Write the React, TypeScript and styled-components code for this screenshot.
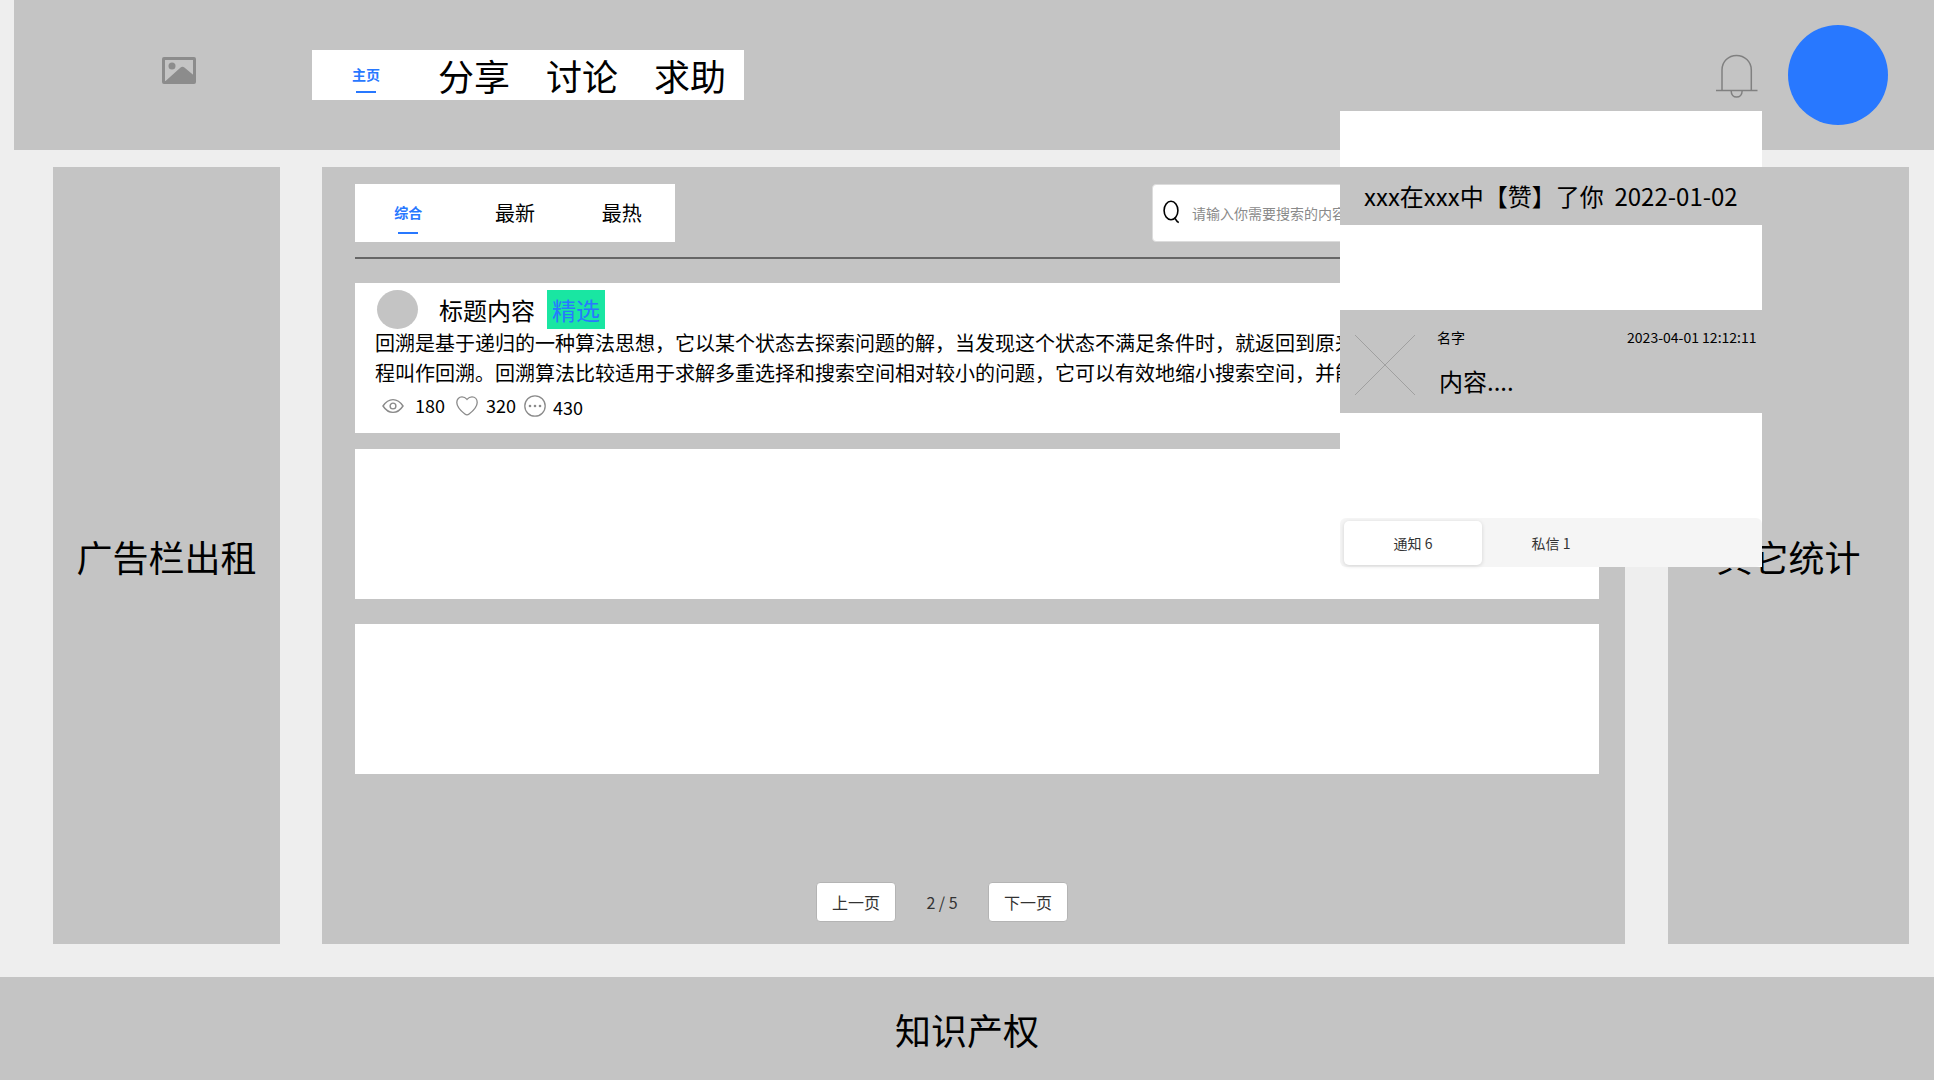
import React from "react";
import styled, { createGlobalStyle } from "styled-components";

const GREY = "#c4c4c4";
const BLUE = "#2878ff";

const GlobalStyle = createGlobalStyle`
  *, *::before, *::after { box-sizing: border-box; }
  body {
    margin: 0;
    background: #eeeeee;
    color: #000;
    font-family: "Noto Sans CJK SC", sans-serif;
  }
  button { font-family: inherit; }
  p { margin: 0; }
  svg { display: block; flex: none; }
`;

const Page = styled.div`
  position: relative;
  display: flex;
  flex-direction: column;
  width: 1934px;
  height: 1080px;
  overflow: hidden;
`;

const Header = styled.header`
  display: flex;
  align-items: center;
  height: 150px;
  margin-left: 14px;
  padding: 0 46px 0 148px;
  background: ${GREY};
`;

const Logo = styled.div`
  width: 150px;
  padding-bottom: 9px;
`;

const Nav = styled.nav`
  display: grid;
  grid-template-columns: repeat(4, 1fr);
  width: 432px;
  height: 50px;
  background: #fff;
`;

const Tab = styled.a<{ $size: number; $active?: boolean; $drop?: number }>`
  display: flex;
  flex-direction: column;
  align-items: center;
  justify-content: center;
  font-size: ${(p) => (p.$active ? 14 : p.$size)}px;
  font-weight: ${(p) => (p.$active ? 700 : 400)};
  line-height: ${(p) => (p.$active ? "20px" : "50px")};
  color: ${(p) => (p.$active ? BLUE : "#000")};
  padding-top: ${(p) => p.$drop ?? 0}px;
  white-space: nowrap;
`;

const Underline = styled.span<{ $gap: number }>`
  width: 20px;
  height: 2px;
  margin-top: ${(p) => p.$gap}px;
  background: ${BLUE};
`;

const HeaderActions = styled.div`
  display: flex;
  align-items: center;
  gap: 30px;
  margin-left: auto;

  svg { margin-top: 2px; }
`;

const Avatar = styled.div<{ $w: number; $h: number; $color: string }>`
  width: ${(p) => p.$w}px;
  height: ${(p) => p.$h}px;
  border-radius: 50%;
  background: ${(p) => p.$color};
`;

const Body = styled.main`
  display: grid;
  grid-template-columns: 227px 1303px 241px;
  column-gap: 42px;
  height: 777px;
  margin: 17px 0 33px 53px;

  & > :last-child { margin-left: 1px; margin-right: -1px; }
`;

const SidePanel = styled.aside`
  display: flex;
  align-items: center;
  justify-content: center;
  background: ${GREY};
  font-size: 36px;
`;

const Content = styled.section`
  display: flex;
  flex-direction: column;
  padding: 17px 26px 0 33px;
  background: ${GREY};
`;

const Toolbar = styled.div`
  display: flex;
  justify-content: space-between;
  height: 75px;
  padding-bottom: 15px;
  border-bottom: 2px solid #666;
`;

const FilterTabs = styled.div`
  display: grid;
  grid-template-columns: repeat(3, 1fr);
  width: 320px;
  height: 58px;
  background: #fff;
`;

const SearchBox = styled.div`
  display: flex;
  align-items: center;
  gap: 12px;
  width: 447px;
  height: 58px;
  padding-left: 10px;
  border: 1px solid #dcdcdc;
  border-radius: 4px;
  background: #fff;

  svg { margin-bottom: 3px; }
`;

const Placeholder = styled.span`
  font-size: 14px;
  line-height: 20px;
  color: #8a8a8a;
`;

const Card = styled.article<{ $gap: number }>`
  height: 150px;
  flex: none;
  margin-top: ${(p) => p.$gap}px;
  padding: 7px 20px 0;
  background: #fff;
`;

const CardHead = styled.div`
  display: flex;
  align-items: center;
  height: 39px;
  padding-left: 2px;
`;

const Title = styled.h2`
  margin: 0 12px 0 21px;
  font-size: 24px;
  line-height: 36px;
  font-weight: 400;
`;

const Badge = styled.span`
  width: 58px;
  height: 39px;
  background: #19e6a2;
  color: ${BLUE};
  font-size: 24px;
  line-height: 39px;
  text-align: center;
`;

const Excerpt = styled.p`
  margin-top: -1px;
  font-size: 20px;
  line-height: 30px;
  white-space: nowrap;
`;

const Stats = styled.div`
  display: flex;
  align-items: center;
  height: 36px;
  padding-left: 7px;
`;

const Count = styled.span<{ $left: number; $right?: number; $lift: number }>`
  margin: 0 ${(p) => p.$right ?? 0}px ${(p) => p.$lift}px ${(p) => p.$left}px;
  font-size: 18px;
  line-height: 26px;
`;

const Pager = styled.div`
  display: flex;
  align-items: center;
  justify-content: center;
  margin-top: 108px;
  padding-right: 70px;
  font-size: 16px;
  color: #333;
`;

const PagerButton = styled.button`
  width: 80px;
  height: 40px;
  padding: 0 0 1px;
  border: 1px solid #b4b4b4;
  border-radius: 4px;
  background: #fff;
  color: #333;
  font-size: 16px;
`;

const PageNumber = styled.span`
  width: 92px;
  text-align: center;
`;

const Footer = styled.footer`
  display: flex;
  align-items: center;
  justify-content: center;
  height: 103px;
  background: ${GREY};
  font-size: 36px;
`;

const Popup = styled.div`
  position: absolute;
  left: 1340px;
  top: 111px;
  display: flex;
  flex-direction: column;
  width: 422px;
  height: 456px;
  padding-top: 56px;
  background: #fff;
`;

const LikeNotice = styled.div`
  height: 58px;
  padding-left: 24px;
  background: ${GREY};
  font-size: 24px;
  line-height: 58px;
  white-space: pre;
`;

const Message = styled.div`
  display: flex;
  height: 103px;
  margin-top: 85px;
  padding: 17px 5.5px 0 15px;
  background: ${GREY};

  & > svg { margin-top: 8px; }
`;

const MessageBody = styled.div`
  flex: 1;
  margin-left: 22px;
`;

const MessageMeta = styled.div`
  display: flex;
  justify-content: space-between;
  font-size: 14px;
  line-height: 20px;
`;

const MessageText = styled.p`
  margin-top: 16px;
  padding-left: 2px;
  font-size: 24px;
  line-height: 36px;
`;

const Segments = styled.div`
  display: flex;
  height: 49px;
  margin-top: auto;
  padding: 3px 4px 2px;
  border-radius: 6px;
  background: #f5f5f5;
`;

const Segment = styled.button<{ $active?: boolean }>`
  width: 138px;
  height: 44px;
  padding: 0;
  border: 0;
  border-radius: 5px;
  background: ${(p) => (p.$active ? "#fff" : "transparent")};
  box-shadow: ${(p) => (p.$active ? "0 1px 4px rgba(0, 0, 0, 0.14)" : "none")};
  color: #333;
  font-size: 14px;
`;

const PictureIcon = () => (
  <svg width="34" height="27" viewBox="0 0 34 27">
    <rect x="1.5" y="1.5" width="31" height="24" rx="0.5" fill="none" stroke="#8c8c8c" strokeWidth="3" />
    <circle cx="10" cy="9" r="3.5" fill="#8c8c8c" />
    <path d="M3 24.5 L18.6 10.6 Q20.5 9 22.4 10.6 L32 18.5 V25.5 H3 Z" fill="#8c8c8c" />
  </svg>
);

const BellIcon = () => (
  <svg width="42" height="44" viewBox="0 0 42 44" fill="none" stroke="#808080" strokeWidth="1.5">
    <path d="M6 36.5 V16 C6 7.5 12.5 1.5 20.5 1.5 S35.3 7.5 35.3 16 V36.5" />
    <path d="M0 36.5 H41.5" />
    <path d="M15.2 37 C15.2 40.7 17.5 43.1 20.6 43.1 S26.1 40.7 26.1 37" />
  </svg>
);

const SearchIcon = () => (
  <svg width="17" height="24" viewBox="0 0 17 24" fill="none" stroke="#000" strokeWidth="1.6">
    <ellipse cx="8" cy="10.5" rx="6.9" ry="9.2" />
    <path d="M11.4 18.3 Q13 19.2 13.4 20.4 Q14 21.8 15.8 22.4" />
  </svg>
);

const EyeIcon = () => (
  <svg width="22" height="16" viewBox="0 0 22 16" fill="none" stroke="#8a8a8a" strokeWidth="1.4">
    <path d="M1 8 C4 3.4 7.2 1.6 11 1.6 S18 3.4 21 8 C18 12.6 14.8 14.4 11 14.4 S4 12.6 1 8 Z" />
    <circle cx="11" cy="8" r="2.9" />
  </svg>
);

const HeartIcon = () => (
  <svg width="22" height="20" viewBox="0 0 22 20" fill="none" stroke="#8a8a8a" strokeWidth="1.3">
    <path d="M11 3.4 C9.2 1.3 7.7 0.9 6 0.9 C3 0.9 0.8 3.2 0.8 6.4 C0.8 10.6 4.2 14.3 8.9 18 Q11 19.6 13.1 18 C17.8 14.3 21.2 10.6 21.2 6.4 C21.2 3.2 19 0.9 16 0.9 C14.3 0.9 12.8 1.3 11 3.4 Z" />
  </svg>
);

const CommentIcon = () => (
  <svg width="22" height="22" viewBox="0 0 22 22" fill="none" stroke="#8a8a8a" strokeWidth="1.3">
    <circle cx="11" cy="11" r="10.2" />
    <g fill="#8a8a8a" stroke="none">
      <circle cx="6" cy="11" r="1.3" />
      <circle cx="11" cy="11" r="1.3" />
      <circle cx="16" cy="11" r="1.3" />
    </g>
  </svg>
);

const CrossIcon = () => (
  <svg width="60" height="60" viewBox="0 0 60 60" stroke="#a0a0a0" strokeWidth="1">
    <path d="M0 0 L60 60 M60 0 L0 60" />
  </svg>
);

export default function App() {
  return (
    <>
      <GlobalStyle />
      <Page>
        <Header>
          <Logo>
            <PictureIcon />
          </Logo>
          <Nav>
            <Tab $size={36} $active $drop={7}>
              主页
              <Underline $gap={7} />
            </Tab>
            <Tab $size={36}>分享</Tab>
            <Tab $size={36}>讨论</Tab>
            <Tab $size={36}>求助</Tab>
          </Nav>
          <HeaderActions>
            <BellIcon />
            <Avatar $w={100} $h={100} $color={BLUE} />
          </HeaderActions>
        </Header>

        <Body>
          <SidePanel>广告栏出租</SidePanel>
          <Content>
            <Toolbar>
              <FilterTabs>
                <Tab $size={20} $active $drop={9}>
                  综合
                  <Underline $gap={10} />
                </Tab>
                <Tab $size={20}>最新</Tab>
                <Tab $size={20}>最热</Tab>
              </FilterTabs>
              <SearchBox>
                <SearchIcon />
                <Placeholder>请输入你需要搜索的内容</Placeholder>
              </SearchBox>
            </Toolbar>

            <Card $gap={24}>
              <CardHead>
                <Avatar $w={41} $h={39} $color={GREY} />
                <Title>标题内容</Title>
                <Badge>精选</Badge>
              </CardHead>
              <Excerpt>
                回溯是基于递归的一种算法思想，它以某个状态去探索问题的解，当发现这个状态不满足条件时，就返回到原来
                <br />
                程叫作回溯。回溯算法比较适用于求解多重选择和搜索空间相对较小的问题，它可以有效地缩小搜索空间，并能
              </Excerpt>
              <Stats>
                <EyeIcon />
                <Count $left={11} $right={11} $lift={3}>180</Count>
                <HeartIcon />
                <Count $left={8} $right={8} $lift={3}>320</Count>
                <CommentIcon />
                <Count $left={7} $lift={-1}>430</Count>
              </Stats>
            </Card>
            <Card $gap={16} />
            <Card $gap={25} />

            <Pager>
              <PagerButton>上一页</PagerButton>
              <PageNumber>2 / 5</PageNumber>
              <PagerButton>下一页</PagerButton>
            </Pager>
          </Content>
          <SidePanel>其它统计</SidePanel>
        </Body>

        <Footer>知识产权</Footer>

        <Popup>
          <LikeNotice>{"xxx在xxx中【赞】了你  2022-01-02"}</LikeNotice>
          <Message>
            <CrossIcon />
            <MessageBody>
              <MessageMeta>
                <span>名字</span>
                <time>2023-04-01 12:12:11</time>
              </MessageMeta>
              <MessageText>内容....</MessageText>
            </MessageBody>
          </Message>
          <Segments>
            <Segment $active>通知 6</Segment>
            <Segment>私信 1</Segment>
          </Segments>
        </Popup>
      </Page>
    </>
  );
}
